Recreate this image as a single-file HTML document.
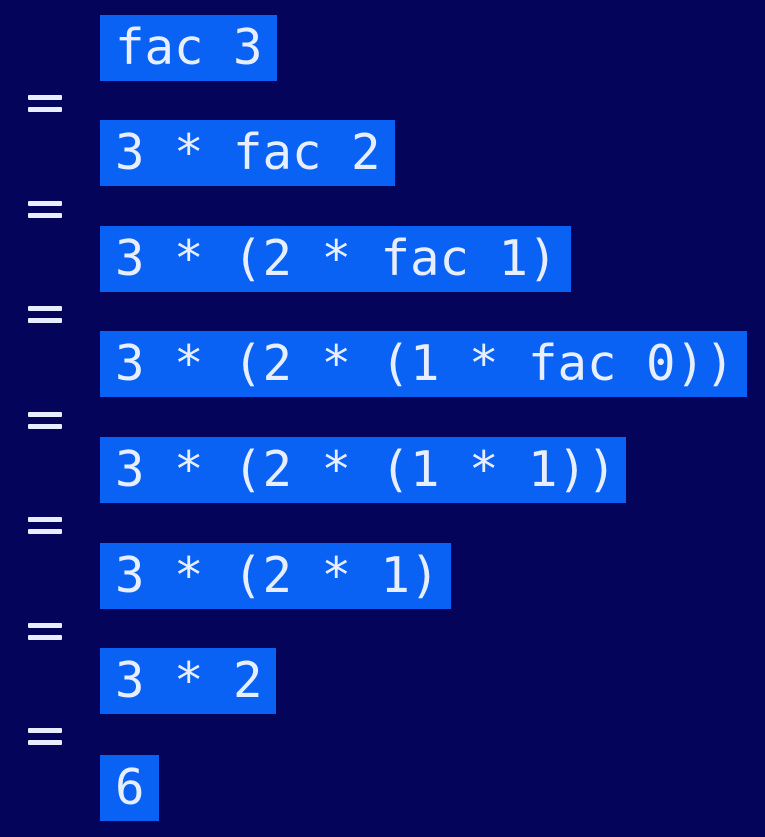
<!DOCTYPE html>
<html><head><style>
html,body{margin:0;padding:0;background:#03045a;width:765px;height:837px;overflow:hidden}
.b{position:absolute;left:100px;height:66px;background:#0a62f4;color:#e6eeff;font-family:"DejaVu Sans Mono","Liberation Mono",monospace;font-size:49px;line-height:66px;padding:0 15px;white-space:pre;box-sizing:border-box}
.e{position:absolute;left:28px;width:34px;height:18px}
.e:before,.e:after{content:"";position:absolute;left:0;width:34px;height:5px;background:#e6eeff;border-radius:1px}
.e:before{top:0}.e:after{top:12px}
</style></head><body>
<div class="b" style="top:15px;width:177px">fac 3</div>
<div class="e" style="top:95px"></div>
<div class="b" style="top:120px;width:295px">3 * fac 2</div>
<div class="e" style="top:201px"></div>
<div class="b" style="top:226px;width:471px">3 * (2 * fac 1)</div>
<div class="e" style="top:306px"></div>
<div class="b" style="top:331px;width:647px">3 * (2 * (1 * fac 0))</div>
<div class="e" style="top:412px"></div>
<div class="b" style="top:437px;width:526px">3 * (2 * (1 * 1))</div>
<div class="e" style="top:517px"></div>
<div class="b" style="top:543px;width:351px">3 * (2 * 1)</div>
<div class="e" style="top:623px"></div>
<div class="b" style="top:648px;width:176px">3 * 2</div>
<div class="e" style="top:728px"></div>
<div class="b" style="top:755px;width:59px">6</div>
</body></html>
